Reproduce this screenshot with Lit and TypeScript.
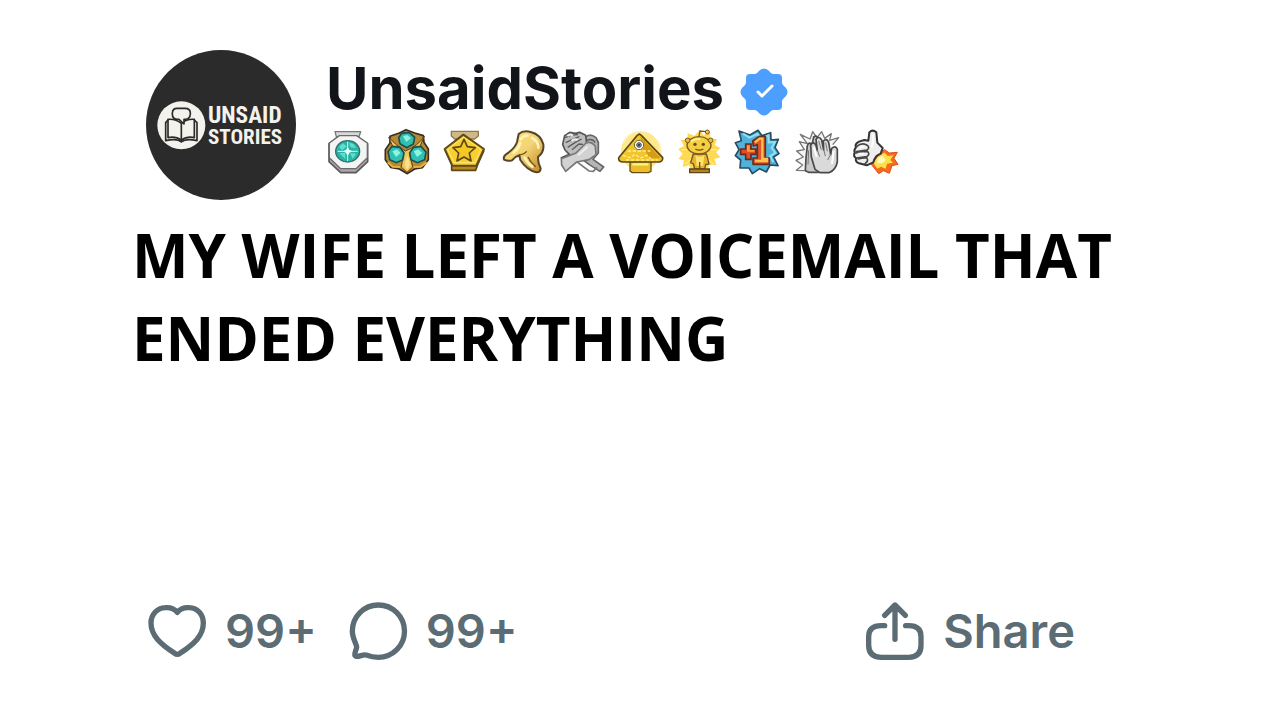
import { LitElement, html, css, svg } from "lit";
import { customElement } from "lit/decorators.js";

interface Award {
  label: string;
  viewBox: string;
  art: unknown;
}

const awards: Award[] = [
  {
    label: "Platinum",
    viewBox: "-3 0 174 165",
    art: svg`
      <path d="M45 20H122L116 38H50Z" fill="#d9d9d9" stroke="#777" stroke-width="4" stroke-linejoin="round"/>
      <path d="M56 34H110L143 56V110L108 143H62L27 110V56Z" fill="#a9a9a9" stroke="#5a5a5a" stroke-width="5" stroke-linejoin="round"/>
      <path d="M58 32H110L142 54V98L108 131H62L28 98V54Z" fill="#f4f4f4" stroke="#6b6b6b" stroke-width="4" stroke-linejoin="round"/>
      <ellipse cx="83" cy="79" rx="36" ry="32" fill="#28b5a5" stroke="#376e6b" stroke-width="4"/>
      <path d="M57 66L68 55L80 64L66 76ZM87 53L101 57L108 70L92 67ZM58 85L76 83V102ZM90 84L109 86L98 101Z" fill="#62dccb"/>
      <path d="M83 50V109M53 79H113" stroke="#c9fff5" stroke-width="3"/>
      <path d="M83 66L88 75L98 79L88 83L83 94L78 83L68 79L78 75Z" fill="#e2fffa"/>`,
  },
  {
    label: "Ternion",
    viewBox: "171 0 174 165",
    art: svg`
      <path d="M258 14L284 24L310 32L312 52L325 72V104L307 128L284 132L262 146L238 132L212 127L196 104V74L210 54V34L238 24Z" fill="#b98a35" stroke="#372c21" stroke-width="5" stroke-linejoin="round"/>
      <path d="M206 36Q225 60 256 78Q294 63 313 34L300 64L269 88L278 126L261 142L244 126L250 88L218 64Z" fill="#f0c75c" stroke="#5b3e19" stroke-width="3"/>
      <path d="M203 112L218 125L240 126M320 112L302 125L281 126" fill="none" stroke="#e8b13e" stroke-width="6"/>
      <g fill="#2fc0b1" stroke="#214d47" stroke-width="5">
        <path d="M245 25L267 22L284 37L280 57L260 68L240 56L236 38Z"/>
        <path d="M216 64L240 67L252 84L248 105L229 113L209 104L204 80Z"/>
        <path d="M280 67L303 64L318 81L314 104L292 113L273 104L269 84Z"/>
      </g>
      <g fill="#8ff2e4"><path d="M249 34L261 30L273 39L259 51Z"/><path d="M217 79L231 73L242 84L228 96Z"/><path d="M281 79L295 73L307 84L291 96Z"/></g>
      <path d="M262 91L270 119L262 134L254 119Z" fill="#ffe38a"/>`,
  },
  {
    label: "Gold",
    viewBox: "0 0 174 165",
    art: svg`
      <path d="M49 19H130V33L119 42H59L49 33Z" fill="#d0b887" stroke="#92794b" stroke-width="4" stroke-linejoin="round"/>
      <path d="M31 76L50 119V136H122L128 119L147 76" fill="#b98825" stroke="#5e4819" stroke-width="5" stroke-linejoin="round"/>
      <path d="M85 29L147 72L124 122H52L29 72Z" fill="#f8cf31" stroke="#5f4b18" stroke-width="6" stroke-linejoin="round"/>
      <path d="M86 37L137 73L120 113H57L38 73Z" fill="none" stroke="#ffe779" stroke-width="3"/>
      <path d="M87 43L97 65L121 68L103 84L108 108L87 96L66 108L71 84L54 68L77 65Z" fill="#f5c824" stroke="#5d4816" stroke-width="5" stroke-linejoin="round"/>`,
  },
  {
    label: "Take my energy",
    viewBox: "174 0 174 165",
    art: svg`
      <defs><linearGradient id="hand" x1="0" y1="0" x2="1" y2="1"><stop offset="0" stop-color="#ffe16a"/><stop offset=".5" stop-color="#f3d477"/><stop offset="1" stop-color="#bd811e"/></linearGradient></defs>
      <path d="M251 27Q265 15 287 21Q318 29 325 58Q328 81 309 96Q308 111 317 130Q316 143 304 142Q276 136 256 105L253 91Q239 95 231 106Q219 110 207 104Q204 93 216 86Q240 70 246 51Z" fill="url(#hand)" stroke="#54452c" stroke-width="6" stroke-linejoin="round"/>
      <path d="M252 88Q264 92 275 79M279 96Q286 112 302 125" fill="none" stroke="#704d18" stroke-width="4"/>
      <path d="M257 43Q264 31 278 32M256 54Q251 70 236 83M291 39Q311 49 310 68M269 98Q278 116 292 125" fill="none" stroke="#fff3b5" stroke-width="8" stroke-linecap="round"/>`,
  },
  {
    label: "Bro fist",
    viewBox: "-3 0 174 165",
    art: svg`
      <path d="M81 66L99 39Q112 23 132 38L139 52V84L123 103L155 126L144 139L112 119L79 94Z" fill="#b5b5b5" stroke="#666" stroke-width="5" stroke-linejoin="round"/>
      <path d="M28 98L52 88L39 75L32 58L38 32L53 22L70 25L83 22L101 31L104 55L96 72L82 91Z" fill="#bdbdbd" stroke="#555" stroke-width="5" stroke-linejoin="round"/>
      <path d="M28 101L72 84L102 54Q118 48 130 64L132 89L111 104L74 111L41 139L29 120Z" fill="#d2d2d2" stroke="#777" stroke-width="5" stroke-linejoin="round"/>
      <path d="M74 110L111 138L124 139L135 127" fill="none" stroke="#777" stroke-width="5"/>
      <path d="M39 38L60 30L78 29M41 53L62 43L82 35M47 67L70 52L89 42M60 74L81 57L93 58M103 47Q120 38 130 53" fill="none" stroke="#5c5c5c" stroke-width="4"/>
      <path d="M46 33Q54 26 63 32M59 48Q66 39 77 45M78 91L107 65" fill="none" stroke="#eee" stroke-width="6"/>`,
  },
  {
    label: "All-seeing upvote",
    viewBox: "171 0 174 165",
    art: svg`
      <circle cx="266" cy="78" r="59" fill="#ffe78b"/><path d="M213 55Q226 25 260 20M315 45Q334 72 322 101" fill="none" stroke="#fff0b2" stroke-width="5"/>
      <path d="M234 109H297V139L289 143H241L234 138Z" fill="#edbd27" stroke="#66501b" stroke-width="4" stroke-linejoin="round"/>
      <path d="M262 27L268 31L332 98Q333 108 323 111H211Q199 110 200 98L256 31Z" fill="#f1c52b" stroke="#594719" stroke-width="5" stroke-linejoin="round"/>
      <path d="M265 34L326 100H292L281 80L270 73Z" fill="#d69c17"/>
      <path d="M212 91L235 98L249 88L265 99L285 91L297 102M227 78H295M222 105H317" fill="none" stroke="#fff093" stroke-width="4" stroke-dasharray="10 5"/>
      <circle cx="261" cy="60" r="14" fill="#fff" stroke="#75622c" stroke-width="3"/>
      <circle cx="261" cy="60" r="7" fill="#8399b2" stroke="#414d58" stroke-width="3"/><circle cx="261" cy="60" r="3" fill="#222"/>
      <path d="M241 118H289" stroke="#fff07e" stroke-width="7"/>`,
  },
  {
    label: "Argentium",
    viewBox: "-9 0 174 165",
    art: svg`
      <path d="M89 14L101 31L120 20L121 43L141 42L134 60L151 69L138 82L151 97L133 102L139 120L118 119L111 139H65L57 121L38 126L42 106L25 102L38 87L25 72L42 63L32 45L53 44V24L73 33Z" fill="#ffd854"/>
      <path d="M89 25V130M36 74H140M45 45L132 118M132 45L45 118" stroke="#fff3b1" stroke-width="3"/>
      <path d="M86 40L90 18L108 20" fill="none" stroke="#715822" stroke-width="4"/><circle cx="112" cy="21" r="6" fill="#f3c13b" stroke="#77561a" stroke-width="3"/>
      <path d="M70 87H109L113 100L117 117L107 119L104 132H74L70 117L62 113Z" fill="#e6b42d" stroke="#6d5625" stroke-width="4"/>
      <path d="M76 90Q90 100 103 90L99 122H80Z" fill="#ffe26b"/><path d="M89 111V130" stroke="#705117" stroke-width="4"/>
      <ellipse cx="87" cy="61" rx="36" ry="26" fill="#f5ce41" stroke="#755c22" stroke-width="4"/>
      <circle cx="53" cy="46" r="7" fill="#e9bb2e" stroke="#755c22" stroke-width="3"/><circle cx="122" cy="46" r="7" fill="#e9bb2e" stroke="#755c22" stroke-width="3"/>
      <path d="M63 50Q76 39 91 43" fill="none" stroke="#fff3a0" stroke-width="6"/>
      <circle cx="75" cy="58" r="5" fill="#6b4817"/><circle cx="100" cy="58" r="5" fill="#6b4817"/><path d="M76 72Q88 79 100 72" fill="none" stroke="#765318" stroke-width="4"/>
      <path d="M59 132H118V143H59Z" fill="#b18524" stroke="#5e471a" stroke-width="4"/>`,
  },
  {
    label: "Plus one",
    viewBox: "165 0 174 165",
    art: svg`
      <path d="M207 18L240 30L264 16L276 32L302 23L303 45L325 43L315 67L327 86L311 96L324 122L300 120L289 141L269 131L247 146L237 129L210 129L212 105L196 92L207 74L196 53L214 47Z" fill="#4fb2dc" stroke="#254c63" stroke-width="5" stroke-linejoin="round"/>
      <path d="M219 26L238 38L262 27L274 41L295 31L296 52L315 51L305 69L316 83L300 94L310 111" fill="none" stroke="#91def0" stroke-width="6"/>
      <path d="M227 57H243V72H258V88H243V103H227V88H212V72H227Z" fill="#df4e25" stroke="#652c20" stroke-width="5"/>
      <path d="M231 61H239V75H253V80H231Z" fill="#ff9e3c"/>
      <path d="M248 48L268 34H286V99H298V118H249V99H262V59L250 63Z" fill="#e5532a" stroke="#61301f" stroke-width="5" stroke-linejoin="round"/>
      <path d="M255 52L269 41H277V102H291V108H255" fill="none" stroke="#ffc14c" stroke-width="7"/>`,
  },
  {
    label: "Faith in humanity restored",
    viewBox: "-15 0 174 165",
    art: svg`
      <path d="M50 137L25 136L44 120L24 106L46 96L26 78L49 74L34 50L58 56L37 28L66 42L74 20L87 38L101 20L110 40L130 26L125 46L152 38L134 59" fill="#f5f5f5" stroke="#777" stroke-width="4" stroke-linejoin="round"/>
      <path d="M52 137L54 99L58 62Q63 48 72 59L77 36Q86 29 90 42L103 59L107 119L93 142H62Z" fill="#c9c9c9" stroke="#4b4b4b" stroke-width="5" stroke-linejoin="round"/>
      <path d="M81 133L70 96L68 60Q76 47 84 61L88 77L84 43Q92 31 101 45L107 75L106 48Q116 38 122 52L128 89L131 70Q143 60 148 73V111Q143 136 123 143H96Z" fill="#dadada" stroke="#484848" stroke-width="5" stroke-linejoin="round"/>
      <path d="M88 75L95 95M107 73L112 93M128 87L119 105M62 76L60 119M92 48L100 74M113 53L118 79" fill="none" stroke="#777" stroke-width="3"/>
      <path d="M77 65L86 96M137 77L132 117" stroke="#fff" stroke-width="6"/>`,
  },
  {
    label: "Rocket like",
    viewBox: "159 0 174 165",
    art: svg`
      <path d="M264 86L290 74L304 84L328 82L318 100L330 118L312 122L304 145L286 137L272 146L254 123L242 111Z" fill="#f56b20" stroke="#e34b19" stroke-width="3" stroke-linejoin="round"/>
      <path d="M273 91L290 83L299 93L316 91L307 105L315 113L297 116L293 131L279 125L268 131L256 113Z" fill="#ffe049"/>
      <path d="M270 99L284 92L293 105L284 115L267 113Z" fill="#fff9ba"/>
      <path d="M241 47L244 22Q254 12 265 22L268 53L284 69L278 86Q262 90 256 112L236 121L213 115Q201 111 204 99Q195 94 200 82Q197 75 204 67Q199 58 213 50L229 45Z" fill="#eee" stroke="#343434" stroke-width="6" stroke-linejoin="round"/>
      <path d="M207 64Q219 53 235 59Q248 67 237 75L205 80M203 84Q220 79 239 80Q247 88 236 95L206 99M211 102Q227 97 237 99Q242 109 231 116" fill="none" stroke="#484848" stroke-width="5" stroke-linecap="round"/>
      <path d="M255 28V54L250 68M214 66L229 65M211 86L228 86" fill="none" stroke="#fff" stroke-width="5"/>`,
  },
];

@customElement("app-root")
export class AppRoot extends LitElement {
  static styles = css`
    :host {
      display: block;
      font-family: Inter, "Liberation Sans", sans-serif;
      background: #fff;
    }
    .post {
      box-sizing: border-box;
      display: flex;
      flex-direction: column;
      min-height: 100vh;
      padding: 50px 132px 58px;
    }
    .head {
      display: flex;
      align-items: flex-start;
      gap: 23px;
      padding-left: 14px;
    }
    .avatar {
      flex: none;
      width: 150px;
      height: 150px;
    }
    .wordmark {
      font-family: "Roboto Condensed", Roboto, sans-serif;
      font-weight: 700;
      fill: #f3f2ec;
    }
    .first {
      font-size: 70px;
    }
    .second {
      font-size: 63px;
    }
    .who {
      padding-top: 2px;
    }
    .name-row {
      display: flex;
      align-items: center;
      gap: 16px;
      padding-left: 7px;
    }
    .name {
      font-size: 58px;
      font-weight: 700;
      line-height: 72px;
      color: #11151a;
      text-decoration: none;
    }
    .verified {
      width: 48px;
      height: 48px;
      margin-top: 8px;
    }
    .awards {
      display: flex;
      margin: 1px 0 0;
      padding: 0;
      list-style: none;
    }
    .award {
      display: block;
      width: 58px;
      height: 55px;
    }
    .title {
      margin: 14px 0 0;
      font-family: "Open Sans", "Noto Sans", sans-serif;
      font-size: 60px;
      font-weight: 700;
      line-height: 83px;
      color: #000;
    }
    .actions {
      display: flex;
      justify-content: space-between;
      margin-top: auto;
      padding: 0 73px 0 14px;
    }
    .group {
      display: flex;
      gap: 30px;
    }
    .action {
      display: flex;
      align-items: center;
      gap: 17px;
      padding: 0;
      border: 0;
      background: none;
      color: #5c6c74;
      font: 600 47px/62px Inter, "Liberation Sans", sans-serif;
      cursor: pointer;
    }
    .icon {
      width: 62px;
      height: 62px;
      fill: none;
      stroke: currentColor;
      stroke-width: 16;
      stroke-linecap: round;
      stroke-linejoin: round;
    }
  `;

  render() {
    return html`
      <article class="post">
        <header class="head">
          <svg class="avatar" viewBox="18 30 450 450" role="img" aria-label="Unsaid Stories logo">
            <circle cx="243" cy="255" r="225" fill="#2b2b2b" />
            <circle cx="124" cy="256" r="72" fill="#f3f2ec" />
            <g fill="none" stroke="#2b2b2b" stroke-width="5" stroke-linejoin="round" stroke-linecap="round">
              <path d="M84 240L77 248V302Q112 294 124 306Q137 294 171 302V248L163 240" />
              <path d="M84 293V238Q107 236 124 250Q141 236 163 238V293Q141 288 124 301Q107 288 84 293ZM124 250V301" />
              <path d="M111 205H135Q151 205 151 219V222Q150 237 136 238H132V252L117 238H111Q97 237 97 222V219Q98 205 111 205Z" fill="#f3f2ec" />
            </g>
            <text class="wordmark first" x="204" y="249">UNSAID</text>
            <text class="wordmark second" x="204" y="313">STORIES</text>
          </svg>
          <div class="who">
            <div class="name-row">
              <a class="name" href="#">UnsaidStories</a>
              <svg class="verified" viewBox="0 0 48 48" role="img" aria-label="Verified">
                <path
                  d="M20 2Q24-1 28 2L31 5Q32 6 34 6H38Q42 6 42 10V14Q42 16 43 17L46 20Q49 24 46 28L43 31Q42 32 42 34V38Q42 42 38 42H34Q32 42 31 43L28 46Q24 49 20 46L17 43Q16 42 14 42H10Q6 42 6 38V34Q6 32 5 31L2 28Q-1 24 2 20L5 17Q6 16 6 14V10Q6 6 10 6H14Q16 6 17 5Z"
                  fill="#4c9ffe"
                />
                <path d="M18 24L22 28L32 18" fill="none" stroke="#fff" stroke-width="3" stroke-linecap="round" stroke-linejoin="round" />
              </svg>
            </div>
            <ul class="awards">
              ${awards.map(
                (a) => html`<li>
                  <svg class="award" viewBox=${a.viewBox} role="img" aria-label=${a.label}>${a.art}</svg>
                </li>`
              )}
            </ul>
          </div>
        </header>
        <h1 class="title">MY WIFE LEFT A VOICEMAIL THAT ENDED EVERYTHING</h1>
        <footer class="actions">
          <div class="group">
            <button class="action" type="button" aria-label="Like, 99+">
              <svg class="icon" viewBox="18 30 186 186">
                <path d="M112 67C101 53 88 52 76 53C51 54 33 73 33 99C33 137 62 162 104 190Q112 196 120 190C162 162 190 137 190 99C190 73 173 54 148 53C136 52 123 53 112 67Z" />
              </svg>
              <span>99+</span>
            </button>
            <button class="action" type="button" aria-label="Comment, 99+">
              <svg class="icon" viewBox="620 30 186 186">
                <path d="M714 45A78 78 0 1 1 714 202C700 202 688 199 677 195C668 192 657 201 647 199C637 195 649 180 649 171C649 163 636 145 636 123A78 78 0 0 1 714 45Z" />
              </svg>
              <span>99+</span>
            </button>
          </div>
          <button class="action" type="button">
            <svg class="icon" viewBox="24 30 186 186">
              <path d="M117 148V46M86 76L117 45L148 76M86 107H76Q38 107 38 140V166Q38 202 76 202H158Q195 202 195 166V140Q195 107 158 107H149" />
            </svg>
            <span>Share</span>
          </button>
        </footer>
      </article>
    `;
  }
}
